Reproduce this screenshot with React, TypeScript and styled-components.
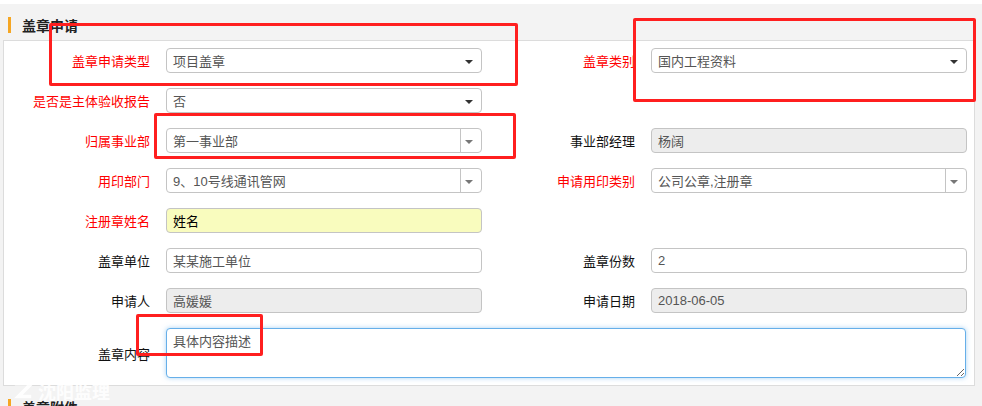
import React from 'react';
import styled, { createGlobalStyle } from 'styled-components';

const GlobalStyle = createGlobalStyle`
  html, body {
    margin: 0;
    padding: 0;
    background: #f3f3f3;
    font-family: "Liberation Sans", "Noto Sans CJK SC", sans-serif;
    font-size: 13px;
    color: #333;
  }
`;

const Page = styled.div`
  position: relative;
  width: 982px;
  height: 406px;
  overflow: hidden;
  background: #f3f3f3;
`;

const TopStrip = styled.div`
  height: 4px;
  background: #fff;
`;

const SectionHeader = styled.div`
  display: flex;
  align-items: center;
  height: 36px;
  padding: 6px 0 0 8px;
  box-sizing: border-box;
`;

const HeaderBar = styled.span`
  width: 3px;
  height: 16px;
  background: #f5a623;
  margin-right: 11px;
`;

const HeaderTitle = styled.span`
  font-size: 14px;
  font-weight: bold;
  color: #222;
`;

const Panel = styled.div`
  margin: 0 7px 0 3px;
  background: #fff;
  border: 1px solid #dcdcdc;
  padding: 7px 0;
  display: flex;
  flex-direction: column;
  gap: 15px;
`;

const Row = styled.div`
  display: grid;
  grid-template-columns: 485px 485px;
`;

const Field = styled.div<{ $wide?: boolean }>`
  display: grid;
  grid-template-columns: 146px 1fr;
  column-gap: 16px;
  align-items: center;
  padding-right: ${(p) => (p.$wide ? '8px' : '7px')};
  grid-column: ${(p) => (p.$wide ? '1 / span 2' : 'auto')};
`;

const Label = styled.label<{ $required?: boolean }>`
  text-align: right;
  color: ${(p) => (p.$required ? '#ff0000' : '#111')};
  font-size: 13px;
  white-space: nowrap;
`;

const Box = styled.div<{ $tone?: 'normal' | 'disabled' | 'yellow' }>`
  position: relative;
  height: 25px;
  box-sizing: border-box;
  border: 1px solid #c4c4c4;
  border-radius: 4px;
  background: ${(p) =>
    p.$tone === 'disabled' ? '#ededed' : p.$tone === 'yellow' ? '#f9fcbe' : '#fff'};
  color: ${(p) => (p.$tone === 'yellow' ? '#000' : '#555')};
  padding: 0 6px;
  display: flex;
  align-items: center;
  font-size: 13px;
  white-space: nowrap;
`;

const Caret = styled.span<{ $light?: boolean }>`
  position: absolute;
  right: 8px;
  top: 50%;
  margin-top: -1px;
  width: 0;
  height: 0;
  border-left: 4px solid transparent;
  border-right: 4px solid transparent;
  border-top: 4px solid ${(p) => (p.$light ? '#777' : '#333')};
`;

const ComboDivider = styled.span`
  position: absolute;
  right: 20px;
  top: 0;
  bottom: 0;
  border-left: 1px solid #c4c4c4;
`;

const TextArea = styled.textarea`
  height: 50px;
  box-sizing: border-box;
  border: 1px solid #66afe9;
  border-radius: 4px;
  box-shadow: 0 0 5px rgba(102, 175, 233, 0.55);
  outline: none;
  padding: 2px 6px;
  font-family: "Liberation Sans", "Noto Sans CJK SC", sans-serif;
  font-size: 13px;
  color: #555;
  resize: both;
`;

const Annotation = styled.div`
  position: absolute;
  border: 3px solid #ff1f1f;
  border-radius: 2px;
  box-sizing: border-box;
  pointer-events: none;
`;

const Watermark = styled.div`
  position: absolute;
  left: 12px;
  top: 378px;
  display: flex;
  align-items: center;
  gap: 4px;
  color: rgba(255, 255, 255, 0.9);
  font-size: 18px;
  font-weight: bold;
  font-family: "Noto Sans CJK SC", sans-serif;
  pointer-events: none;
`;

type Tone = 'normal' | 'disabled' | 'yellow';

const Input: React.FC<{ value: string; tone?: Tone }> = ({ value, tone = 'normal' }) => (
  <Box $tone={tone}>{value}</Box>
);

const Select: React.FC<{ value: string; combo?: boolean }> = ({ value, combo }) => (
  <Box>
    {value}
    {combo && <ComboDivider />}
    <Caret $light={combo} />
  </Box>
);

const annotations = [
  { left: 49, top: 23, width: 469, height: 63 },
  { left: 633, top: 18, width: 343, height: 84 },
  { left: 154, top: 113, width: 362, height: 46 },
  { left: 136, top: 314, width: 127, height: 42 },
];

export default function App() {
  return (
    <Page>
      <GlobalStyle />
      <TopStrip />
      <SectionHeader>
        <HeaderBar />
        <HeaderTitle>盖章申请</HeaderTitle>
      </SectionHeader>
      <Panel>
        <Row>
          <Field>
            <Label $required>盖章申请类型</Label>
            <Select value="项目盖章" />
          </Field>
          <Field>
            <Label $required>盖章类别</Label>
            <Select value="国内工程资料" />
          </Field>
        </Row>
        <Row>
          <Field>
            <Label $required>是否是主体验收报告</Label>
            <Select value="否" />
          </Field>
        </Row>
        <Row>
          <Field>
            <Label $required>归属事业部</Label>
            <Select value="第一事业部" combo />
          </Field>
          <Field>
            <Label>事业部经理</Label>
            <Input value="杨阔" tone="disabled" />
          </Field>
        </Row>
        <Row>
          <Field>
            <Label $required>用印部门</Label>
            <Select value="9、10号线通讯管网" combo />
          </Field>
          <Field>
            <Label $required>申请用印类别</Label>
            <Select value="公司公章,注册章" combo />
          </Field>
        </Row>
        <Row>
          <Field>
            <Label $required>注册章姓名</Label>
            <Input value="姓名" tone="yellow" />
          </Field>
        </Row>
        <Row>
          <Field>
            <Label>盖章单位</Label>
            <Input value="某某施工单位" />
          </Field>
          <Field>
            <Label>盖章份数</Label>
            <Input value="2" />
          </Field>
        </Row>
        <Row>
          <Field>
            <Label>申请人</Label>
            <Input value="高媛媛" tone="disabled" />
          </Field>
          <Field>
            <Label>申请日期</Label>
            <Input value="2018-06-05" tone="disabled" />
          </Field>
        </Row>
        <Row>
          <Field $wide>
            <Label>盖章内容</Label>
            <TextArea defaultValue="具体内容描述" />
          </Field>
        </Row>
      </Panel>
      <SectionHeader>
        <HeaderBar />
        <HeaderTitle>盖章附件</HeaderTitle>
      </SectionHeader>
      <Watermark>
        <svg width="22" height="20" viewBox="0 0 24 22">
          <path d="M3 3 H21 L7 17 H21" fill="none" stroke="rgba(255,255,255,0.9)" strokeWidth="4" />
        </svg>
        <span>沈阳监理</span>
      </Watermark>
      {annotations.map((a, i) => (
        <Annotation key={i} style={a} />
      ))}
    </Page>
  );
}
